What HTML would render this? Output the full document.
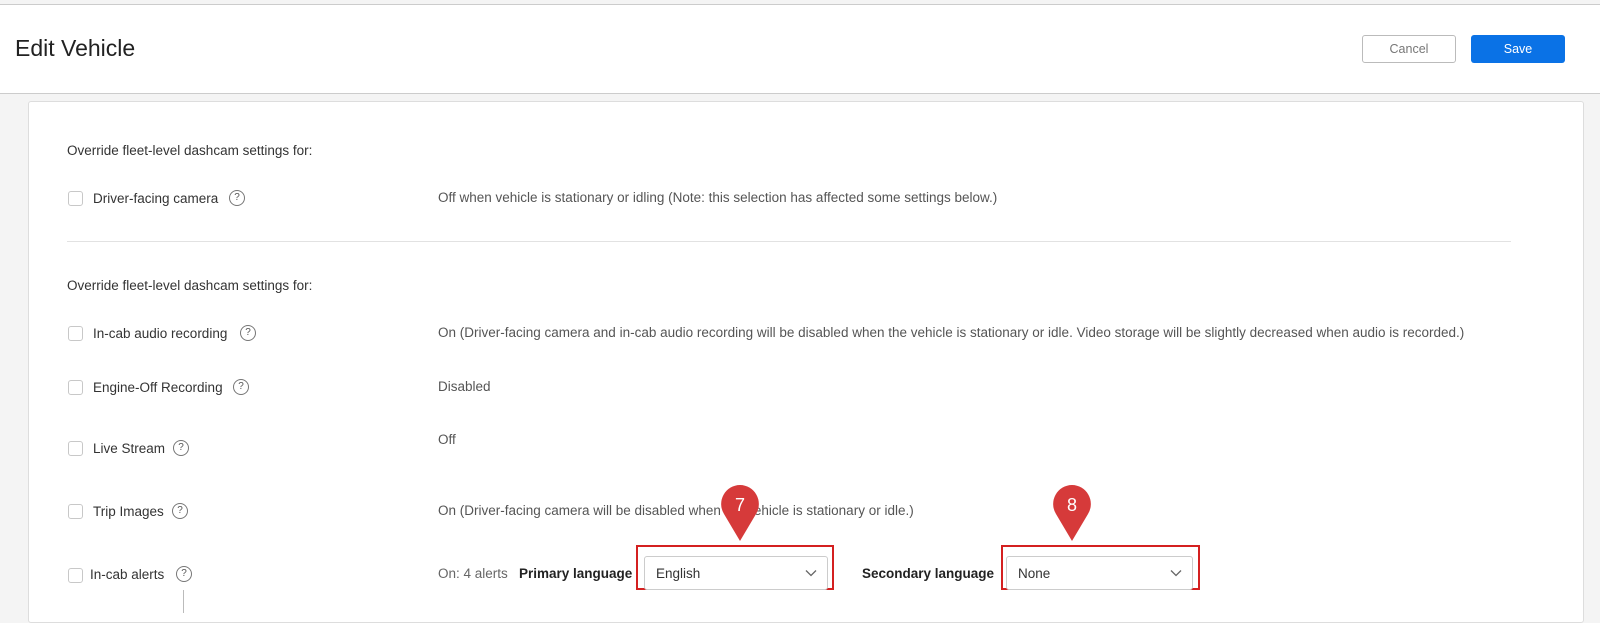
<!DOCTYPE html>
<html><head><style>
body{margin:0;width:1600px;height:613px;overflow:hidden;background:#f4f4f4;font-family:"Liberation Sans",sans-serif;position:relative}
.a{position:absolute}
.t{font-size:13.5px;color:#333;white-space:nowrap}
.g{font-size:13.5px;color:#555;white-space:nowrap}
.cb{width:13px;height:13px;border:1px solid #c8c8c8;border-radius:3px;background:#fff}
.q{width:14px;height:14px;border:1px solid #777;border-radius:50%;font-size:10px;color:#555;text-align:center;line-height:14px}
.sel{border:1px solid #ccc;border-radius:3px;background:#fff;height:34px;font-size:13.5px;color:#333;line-height:34px;padding-left:11px;box-sizing:border-box}
.red{border:2px solid #d42020;box-sizing:border-box}
.chev{position:absolute;right:10px;top:12px}
</style></head><body>
<div class="a" style="left:0;top:0;width:1600px;height:4px;background:#f4f4f4;border-bottom:1px solid #ccc"></div>
<div class="a" style="left:0;top:5px;width:1600px;height:88px;background:#fff;border-bottom:1px solid #ccc"></div>
<div class="a" style="left:15px;top:35px;font-size:23px;color:#222">Edit Vehicle</div>
<div class="a" style="left:1362px;top:35px;width:94px;height:28px;border:1px solid #bbb;border-radius:3px;box-sizing:border-box;font-size:12.5px;color:#777;text-align:center;line-height:26px;background:#fff">Cancel</div>
<div class="a" style="left:1471px;top:35px;width:94px;height:28px;background:#0a72e6;border-radius:3px;font-size:12.5px;color:#fff;text-align:center;line-height:28px">Save</div>
<div class="a" style="left:28px;top:101px;width:1554px;height:520px;background:#fff;border:1px solid #ddd;border-radius:3px"></div>
<div class="a t" style="left:67px;top:143px">Override fleet-level dashcam settings for:</div>
<div class="a cb" style="left:68px;top:191px"></div><div class="a t" style="left:93px;top:191px">Driver-facing camera</div><div class="a q" style="left:229px;top:190px">?</div>
<div class="a g" style="left:438px;top:190px">Off when vehicle is stationary or idling (Note: this selection has affected some settings below.)</div>
<div class="a" style="left:67px;top:241px;width:1444px;height:1px;background:#e2e2e2"></div>
<div class="a t" style="left:67px;top:278px">Override fleet-level dashcam settings for:</div>
<div class="a cb" style="left:68px;top:326px"></div><div class="a t" style="left:93px;top:326px">In-cab audio recording</div><div class="a q" style="left:240px;top:325px">?</div>
<div class="a g" style="left:438px;top:325px">On (Driver-facing camera and in-cab audio recording will be disabled when the vehicle is stationary or idle. Video storage will be slightly decreased when audio is recorded.)</div>
<div class="a cb" style="left:68px;top:380px"></div><div class="a t" style="left:93px;top:380px">Engine-Off Recording</div><div class="a q" style="left:233px;top:379px">?</div>
<div class="a g" style="left:438px;top:379px">Disabled</div>
<div class="a cb" style="left:68px;top:441px"></div><div class="a t" style="left:93px;top:441px">Live Stream</div><div class="a q" style="left:173px;top:440px">?</div>
<div class="a g" style="left:438px;top:432px">Off</div>
<div class="a cb" style="left:68px;top:504px"></div><div class="a t" style="left:93px;top:504px">Trip Images</div><div class="a q" style="left:172px;top:503px">?</div>
<div class="a g" style="left:438px;top:503px">On (Driver-facing camera will be disabled when the vehicle is stationary or idle.)</div>
<div class="a cb" style="left:68px;top:568px"></div><div class="a t" style="left:90px;top:567px">In-cab alerts</div><div class="a q" style="left:176px;top:566px">?</div>
<div class="a" style="left:183px;top:590px;width:1px;height:23px;background:#bbb"></div>
<div class="a g" style="left:438px;top:566px;color:#666">On: 4 alerts</div>
<div class="a t" style="left:519px;top:566px;font-weight:bold;color:#222">Primary language</div>
<div class="a red" style="left:636px;top:545px;width:198px;height:45px"></div>
<div class="a sel" style="left:644px;top:556px;width:184px">English<svg class="chev" width="12" height="8" viewBox="0 0 12 8"><path d="M1 1.5L6 6.5L11 1.5" fill="none" stroke="#666" stroke-width="1.3"/></svg></div>
<div class="a t" style="left:862px;top:566px;font-weight:bold;color:#222">Secondary language</div>
<div class="a red" style="left:1001px;top:545px;width:199px;height:45px"></div>
<div class="a sel" style="left:1006px;top:556px;width:187px">None<svg class="chev" width="12" height="8" viewBox="0 0 12 8"><path d="M1 1.5L6 6.5L11 1.5" fill="none" stroke="#666" stroke-width="1.3"/></svg></div>
<svg class="a" style="left:720px;top:484px" width="40" height="58" viewBox="0 0 40 58"><path d="M20 1A19 19 0 0 1 36 30L20 57L4 30A19 19 0 0 1 20 1Z" fill="#d63a3a"/><text x="20" y="27" fill="#fff" font-size="18" text-anchor="middle" font-family="Liberation Sans">7</text></svg>
<svg class="a" style="left:1052px;top:484px" width="40" height="58" viewBox="0 0 40 58"><path d="M20 1A19 19 0 0 1 36 30L20 57L4 30A19 19 0 0 1 20 1Z" fill="#d63a3a"/><text x="20" y="27" fill="#fff" font-size="18" text-anchor="middle" font-family="Liberation Sans">8</text></svg>
</body></html>
